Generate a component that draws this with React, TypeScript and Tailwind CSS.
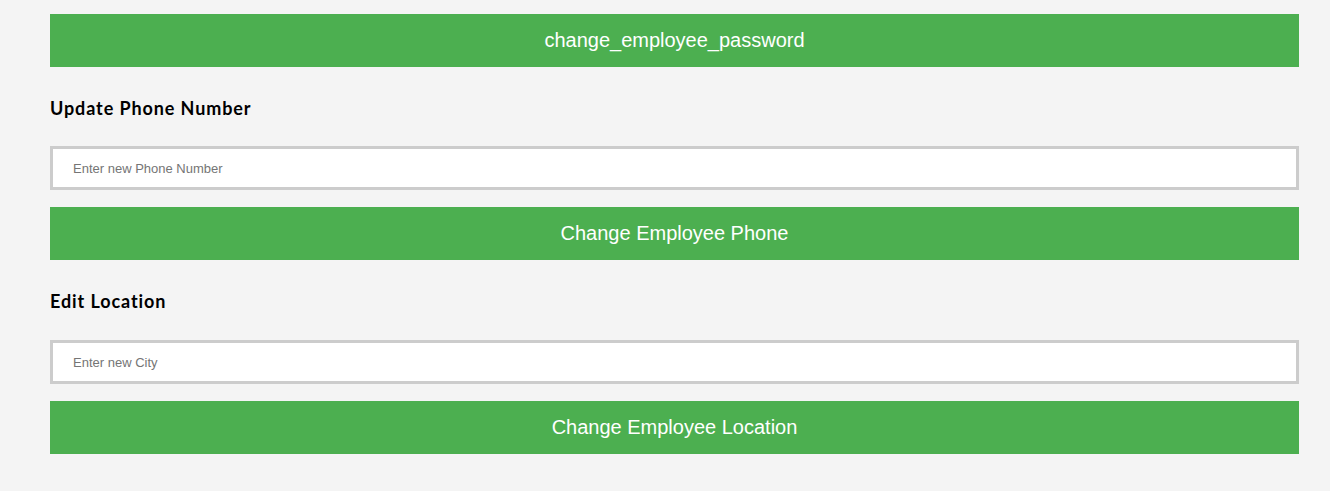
const sections = [
  { title: "Update Phone Number", placeholder: "Enter new Phone Number", button: "Change Employee Phone", gap: "mt-[27px]" },
  { title: "Edit Location", placeholder: "Enter new City", button: "Change Employee Location", gap: "mt-[28px]" },
];

const GreenButton = ({ label }: { label: string }) => (
  <button className="w-full h-[53px] pb-[2px] bg-[#4caf50] text-white text-[20px] font-['Liberation_Sans',Arial,sans-serif] cursor-pointer">
    {label}
  </button>
);

export default function App() {
  return (
    <div className="min-h-[491px] w-full bg-[#f4f4f4] px-[50px] pt-[14px] pb-[37px] box-border">
      <div className="w-[1249px] flex flex-col">
        <GreenButton label="change_employee_password" />
        {sections.map((s) => (
          <div key={s.title} className="flex flex-col">
            <h3 className="mt-[30px] h-[22px] leading-[22px] text-[18px] font-bold tracking-[0.9px] text-black font-['Comic_Sans_MS','Lato',sans-serif]">
              {s.title}
            </h3>
            <input
              type="text"
              placeholder={s.placeholder}
              className={`${s.gap} h-[44px] w-full bg-white border-[3px] border-[#cccccc] pl-[20px] text-[13px] font-['Liberation_Sans',Arial,sans-serif] placeholder:text-[#757575] outline-none`}
            />
            <div className="mt-[17px]">
              <GreenButton label={s.button} />
            </div>
          </div>
        ))}
      </div>
    </div>
  );
}
